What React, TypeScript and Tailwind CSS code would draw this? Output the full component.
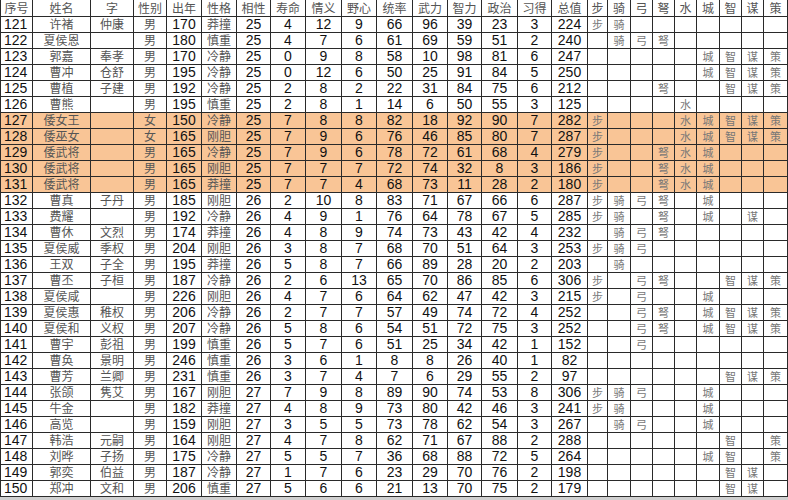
import React from 'react'

const headers = ['序号', '姓名', '字', '性别', '出年', '性格', '相性', '寿命', '情义', '野心', '统率', '武力', '智力', '政治', '习得', '总值', '步', '骑', '弓', '弩', '水', '城', '智', '谋', '策']
const colClasses = [
  'w-[32px]', 'w-[58px]', 'w-[43px]', 'w-[33px]', 'w-[35px]', 'w-[35px]', 'w-[34px]', 'w-[35px]', 'w-[36px]',
  'w-[35px]', 'w-[36px]', 'w-[35px]', 'w-[34px]', 'w-[36px]', 'w-[34px]', 'w-[36px]',
  'w-[20px]', 'w-[23px]', 'w-[22px]', 'w-[22px]', 'w-[22px]', 'w-[23px]', 'w-[22px]', 'w-[22px]', 'w-[24px]',
]
const skills = ['步', '骑', '弓', '弩', '水', '城', '智', '谋', '策']

// id, name, zi, sex, year, trait, numbers, skill flags
const rows: [string, string, string, string, string, string, number[], string][] = [
  ['121', '许褚', '仲康', '男', '170', '莽撞', [25, 4, 12, 9, 66, 96, 39, 23, 3, 224], '110000000'],
  ['122', '夏侯恩', '', '男', '180', '慎重', [25, 4, 7, 6, 61, 69, 59, 51, 2, 240], '011100000'],
  ['123', '郭嘉', '奉孝', '男', '170', '冷静', [25, 0, 9, 8, 58, 10, 98, 81, 6, 247], '000001111'],
  ['124', '曹冲', '仓舒', '男', '195', '冷静', [25, 0, 12, 6, 50, 25, 91, 84, 5, 250], '000001111'],
  ['125', '曹植', '子建', '男', '192', '冷静', [25, 2, 8, 2, 22, 31, 84, 75, 6, 212], '000100111'],
  ['126', '曹熊', '', '男', '195', '慎重', [25, 2, 8, 1, 14, 6, 50, 55, 3, 125], '000010000'],
  ['127', '倭女王', '', '女', '150', '冷静', [25, 7, 8, 8, 82, 18, 92, 90, 7, 282], '100011111'],
  ['128', '倭巫女', '', '女', '165', '刚胆', [25, 7, 9, 6, 76, 46, 85, 80, 7, 287], '100011111'],
  ['129', '倭武将', '', '男', '165', '冷静', [25, 7, 9, 6, 78, 72, 61, 68, 4, 279], '100111000'],
  ['130', '倭武将', '', '男', '165', '刚胆', [25, 7, 7, 7, 72, 74, 32, 8, 3, 186], '100111000'],
  ['131', '倭武将', '', '男', '165', '莽撞', [25, 7, 7, 4, 68, 73, 11, 28, 2, 180], '100111000'],
  ['132', '曹真', '子丹', '男', '185', '刚胆', [26, 2, 10, 8, 83, 71, 67, 66, 6, 287], '111101000'],
  ['133', '费耀', '', '男', '192', '冷静', [26, 4, 9, 1, 76, 64, 78, 67, 5, 285], '110101010'],
  ['134', '曹休', '文烈', '男', '174', '莽撞', [26, 4, 8, 9, 74, 73, 43, 42, 4, 232], '011100000'],
  ['135', '夏侯威', '季权', '男', '204', '刚胆', [26, 3, 8, 7, 68, 70, 51, 64, 3, 253], '111000000'],
  ['136', '王双', '子全', '男', '195', '莽撞', [26, 5, 8, 7, 66, 89, 28, 20, 2, 203], '010000000'],
  ['137', '曹丕', '子桓', '男', '187', '冷静', [26, 2, 6, 13, 65, 70, 86, 85, 6, 306], '101100111'],
  ['138', '夏侯咸', '', '男', '226', '刚胆', [26, 4, 7, 6, 64, 62, 47, 42, 3, 215], '101001000'],
  ['139', '夏侯惠', '稚权', '男', '206', '冷静', [26, 2, 7, 7, 57, 49, 74, 72, 4, 252], '001101111'],
  ['140', '夏侯和', '义权', '男', '207', '冷静', [26, 5, 8, 6, 54, 51, 72, 75, 3, 252], '001101111'],
  ['141', '曹宇', '彭祖', '男', '199', '慎重', [26, 5, 7, 6, 51, 25, 34, 42, 1, 152], '001000000'],
  ['142', '曹奂', '景明', '男', '246', '慎重', [26, 3, 6, 1, 8, 8, 26, 40, 1, 82], '000000000'],
  ['143', '曹芳', '兰卿', '男', '231', '慎重', [26, 3, 7, 4, 7, 6, 29, 55, 2, 97], '000000111'],
  ['144', '张颌', '隽艾', '男', '167', '刚胆', [27, 7, 9, 8, 89, 90, 74, 53, 8, 306], '111001000'],
  ['145', '牛金', '', '男', '182', '莽撞', [27, 4, 8, 9, 73, 80, 42, 46, 3, 241], '110001000'],
  ['146', '高览', '', '男', '159', '刚胆', [27, 3, 5, 5, 73, 78, 62, 54, 3, 267], '011001000'],
  ['147', '韩浩', '元嗣', '男', '164', '刚胆', [27, 4, 7, 8, 62, 71, 67, 88, 2, 288], '000000101'],
  ['148', '刘晔', '子扬', '男', '175', '冷静', [27, 5, 5, 7, 36, 68, 88, 72, 5, 264], '000001101'],
  ['149', '郭奕', '伯益', '男', '187', '冷静', [27, 1, 7, 6, 23, 29, 70, 76, 2, 198], '000000110'],
  ['150', '郑冲', '文和', '男', '206', '慎重', [27, 5, 6, 6, 21, 13, 70, 75, 2, 179], '000000110'],
]

const cjk = "font-['Noto_Sans_CJK_SC',sans-serif]"
const latin = "font-['Liberation_Sans',Arial,sans-serif]"

export default function App() {
  return (
    <div className="w-[788px] h-[500px] bg-[#cfcfcf] overflow-hidden">
      <table className="w-[788px] table-fixed border-collapse bg-white">
        <colgroup>
          {colClasses.map((c, i) => (
            <col key={i} className={c} />
          ))}
        </colgroup>
        <thead>
          <tr className="h-[16px]">
            {headers.map((h) => (
              <th
                key={h}
                className={`${cjk} border-x border-b border-[#2a2a2a] p-0 text-center text-[12px] leading-[14px] font-normal text-[#555] whitespace-nowrap`}
              >
                {h}
              </th>
            ))}
          </tr>
        </thead>
        <tbody>
          {rows.map(([id, name, zi, sex, year, trait, nums, flags]) => {
            const hl = Number(id) >= 127 && Number(id) <= 131
            const cell = `border border-[#2a2a2a] p-0 h-[16px] whitespace-nowrap ${hl ? 'bg-[#f9c596]' : ''}`
            return (
              <tr key={id} className="h-[16px]">
                <td className={`${cell} ${latin} pl-[3px] text-left text-[14px] leading-[14px] text-[#111]`}>{id}</td>
                {[name, zi, sex].map((t, i) => (
                  <td key={i} className={`${cell} ${cjk} text-center text-[12px] leading-[14px] text-[#555]`}>
                    {t}
                  </td>
                ))}
                <td className={`${cell} ${latin} text-center text-[14px] leading-[14px] text-[#111]`}>{year}</td>
                <td className={`${cell} ${cjk} text-center text-[12px] leading-[14px] text-[#555]`}>{trait}</td>
                {nums.map((n, i) => (
                  <td key={i} className={`${cell} ${latin} text-center text-[14px] leading-[14px] text-[#111]`}>
                    {n}
                  </td>
                ))}
                {skills.map((s, i) => (
                  <td key={s} className={`${cell} ${cjk} text-center text-[11px] leading-[14px] text-[#777]`}>
                    {flags[i] === '1' ? s : ''}
                  </td>
                ))}
              </tr>
            )
          })}
        </tbody>
      </table>
    </div>
  )
}
